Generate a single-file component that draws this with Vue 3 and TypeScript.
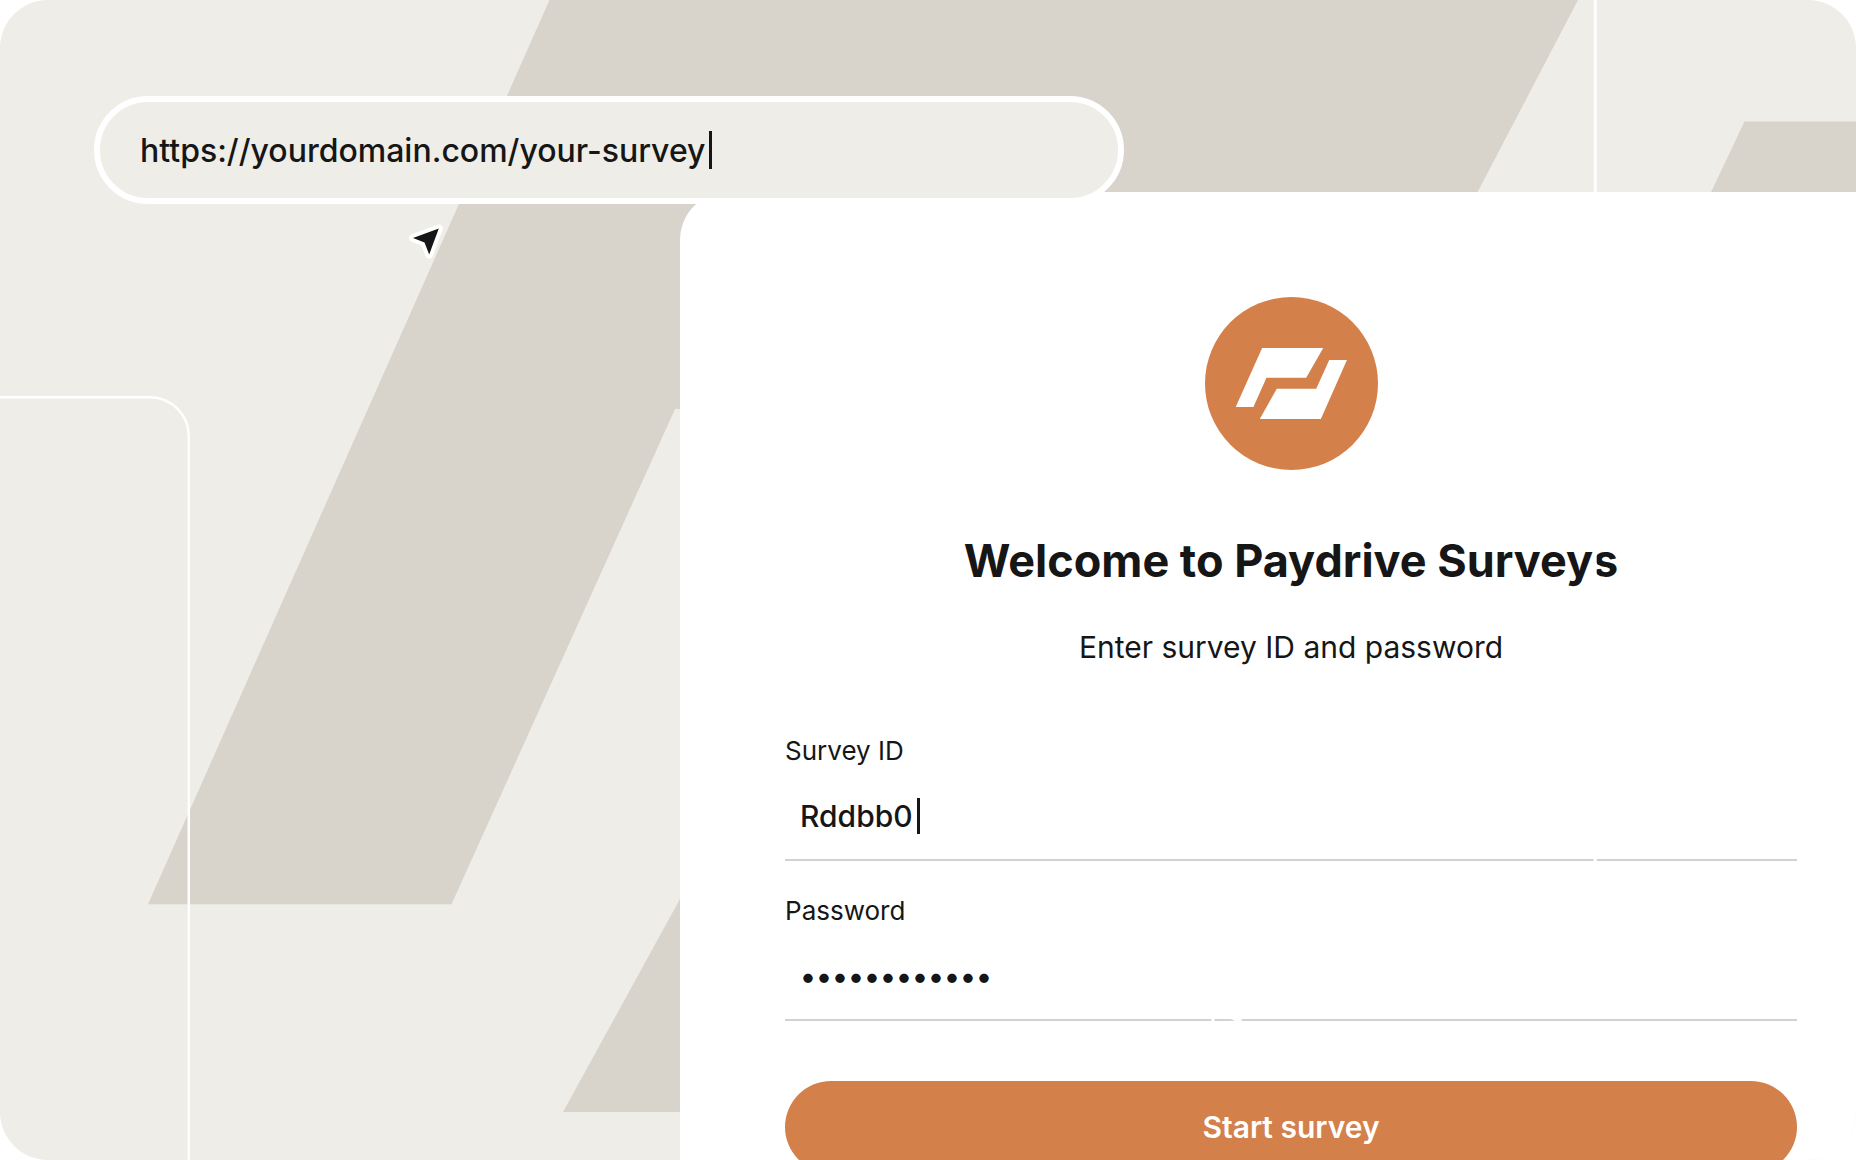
<script setup lang="ts">
import { ref } from 'vue'

const address = ref('https://yourdomain.com/your-survey')
const surveyId = ref('Rddbb0')
const password = ref('surveypass12')
</script>

<template>
  <main class="stage">
    <svg class="backdrop" viewBox="0 0 1856 1160" preserveAspectRatio="xMinYMin slice" aria-hidden="true">
      <g fill="#d8d3cb">
        <path d="M549.500 0H1578L1364 409H675L451.500 904.300H148Z" />
        <path d="M563 1112L680 899H1000V1112Z" />
        <path d="M1744.500 121.500H1856V300H1660Z" />
      </g>
      <path d="M-10 397.300H150A39 39 0 0 1 188.800 436V1170" fill="none" stroke="#fff" stroke-width="2.500" />
    </svg>

    <div class="address-bar">
      <input v-model="address" class="grow" type="text" aria-label="Survey address" />
      <span class="caret"></span>
    </div>

    <svg class="pointer" viewBox="0 0 40 40" aria-hidden="true">
      <path d="M34.800 8.500L9 18L20.500 22.500L25.200 34.500Z" />
    </svg>

    <form class="card" @submit.prevent>
      <svg class="logo" viewBox="74 51 518 518" role="img" aria-label="Paydrive">
        <circle cx="333" cy="310" r="259" fill="#d4804b" />
        <path
          fill="#fff"
          d="M245 204H428L377 293H258L219 380H166ZM446 240H499L421 416H238L289 326H407Z"
        />
      </svg>
      <h1>Welcome to Paydrive Surveys</h1>
      <p class="intro">Enter survey ID and password</p>

      <div class="field">
        <label for="survey-id">Survey ID</label>
        <div class="control">
          <input id="survey-id" v-model="surveyId" class="grow" type="text" />
          <span class="caret"></span>
        </div>
      </div>
      <div class="field">
        <label for="password">Password</label>
        <div class="control">
          <input id="password" v-model="password" class="grow" type="password" />
        </div>
      </div>

      <button type="submit">Start survey</button>
    </form>

    <svg class="backdrop outline" viewBox="0 0 1856 1160" preserveAspectRatio="xMinYMin slice" aria-hidden="true">
      <path d="M1595.200 0V920A40 40 0 0 1 1555 960H1253A40 40 0 0 0 1213 1000V1026" />
      <path d="M1228 1016Q1236 1019 1241 1023L1239 1017" />
    </svg>
  </main>
</template>

<style>
body {
  margin: 0;
  background: #fff;
}
</style>

<style scoped>
.stage {
  position: relative;
  box-sizing: border-box;
  height: 100vh;
  padding-top: 96px;
  overflow: hidden;
  border-radius: 48px;
  background: #eeede7;
  color: #161616;
  font-family: Inter, 'Liberation Sans', sans-serif;
}

.backdrop {
  position: absolute;
  top: 0;
  left: 0;
  width: 100%;
  height: 100%;
}

.outline {
  z-index: 3;
  fill: none;
  stroke: #fff;
  stroke-width: 3;
  pointer-events: none;
}

.address-bar {
  position: relative;
  z-index: 2;
  display: flex;
  align-items: center;
  box-sizing: border-box;
  width: 55.5%;
  height: 108px;
  margin-left: 94px;
  padding: 0 40px;
  border: 6px solid #fff;
  border-radius: 54px;
  background: #eeede7;
}

input {
  min-width: 0;
  padding: 0;
  border: 0;
  outline: 0;
  background: transparent;
  color: inherit;
  font: 500 30px/36px Inter, 'Liberation Sans', sans-serif;
}

.grow {
  field-sizing: content;
}

.address-bar input {
  padding-top: 2px;
  font-size: 32px;
  line-height: 40px;
}

.caret {
  width: 3px;
  height: 38px;
  margin-left: 4px;
  background: #161616;
}

.control .caret {
  height: 36px;
}

.pointer {
  position: absolute;
  z-index: 3;
  top: 220px;
  left: 404px;
  width: 40px;
  height: 40px;
  overflow: visible;
}

.pointer path {
  fill: #161616;
  stroke: #fff;
  stroke-width: 8;
  stroke-linejoin: round;
  paint-order: stroke;
}

.card {
  position: relative;
  z-index: 1;
  display: flex;
  flex-direction: column;
  margin: -12px 0 0 36.640%;
  padding: 105px 59px 105px 105px;
  border-top-left-radius: 48px;
  background: #fff;
}

.logo {
  align-self: center;
  width: 173px;
  height: 173px;
}

h1 {
  margin: 63px 0 0;
  font-size: 45px;
  font-weight: 700;
  line-height: 56px;
  text-align: center;
}

.intro {
  margin: 40px 0 36px;
  font-size: 30px;
  line-height: 36px;
  text-align: center;
}

.field {
  margin-top: 34px;
}

label {
  display: block;
  font-size: 26px;
  line-height: 32px;
}

.control {
  display: flex;
  align-items: center;
  box-sizing: border-box;
  height: 94px;
  padding: 5px 15px 0;
  border-bottom: 2px solid #d2d2d2;
}

button {
  height: 92px;
  margin-top: 60px;
  border: 0;
  border-radius: 46px;
  background: #d4804b;
  color: #fff;
  font: 600 30px/36px Inter, 'Liberation Sans', sans-serif;
}
</style>
